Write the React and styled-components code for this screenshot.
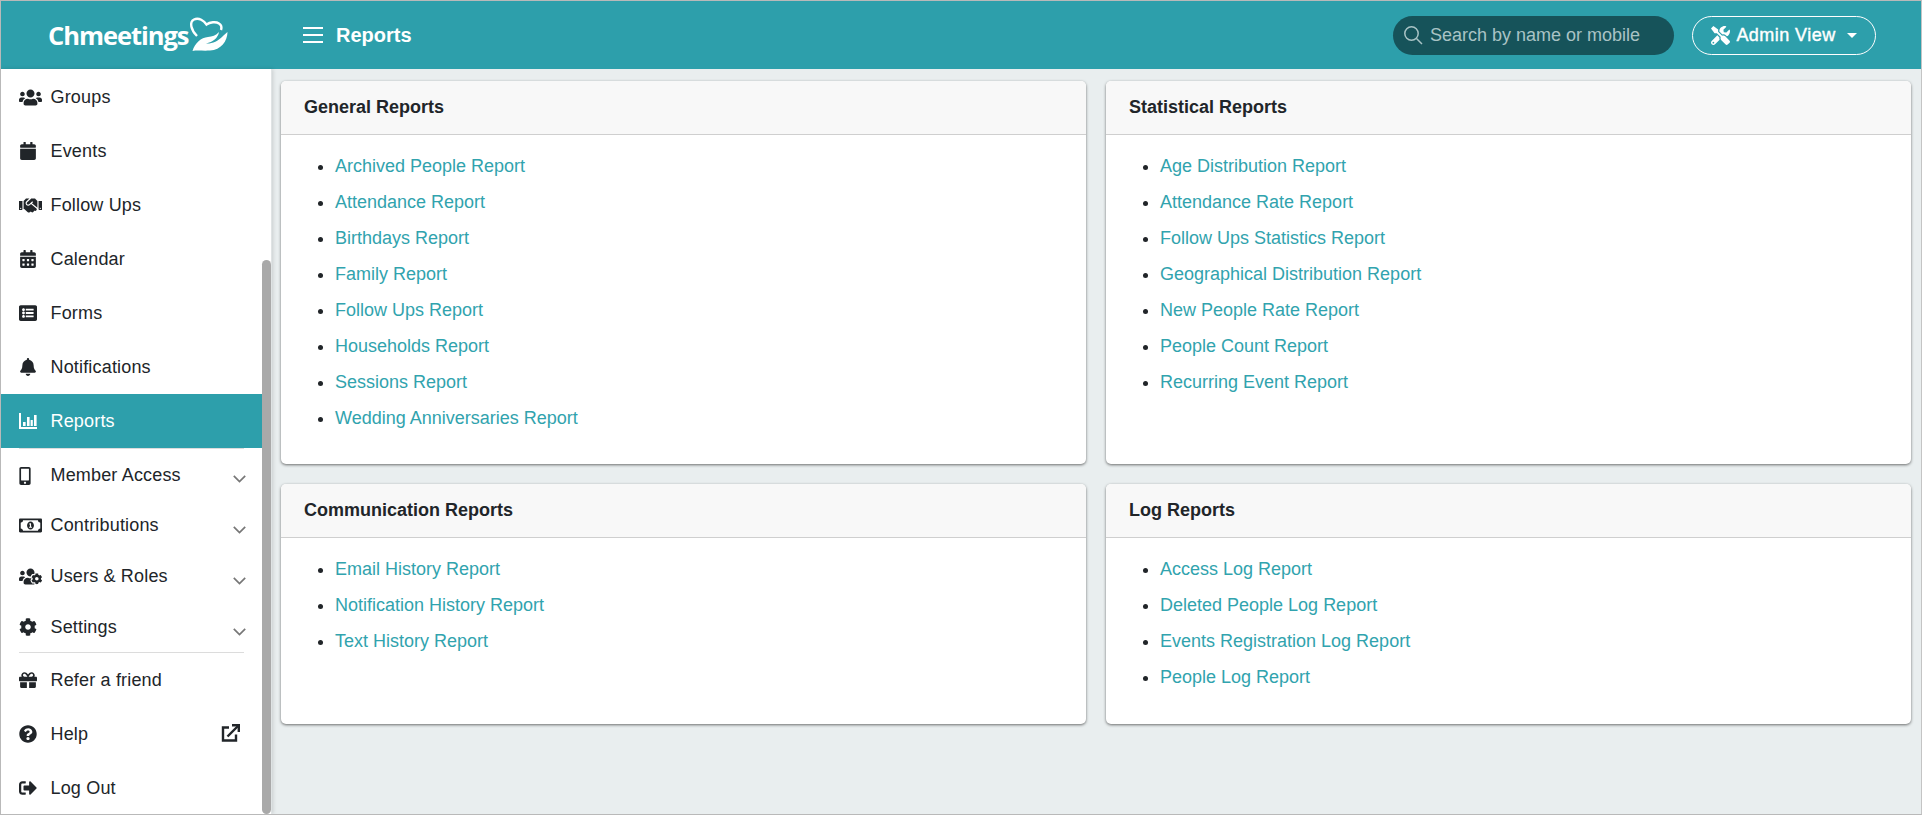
import React from "react";
import styled, { createGlobalStyle } from "styled-components";
import {
  FaUsers, FaCalendar, FaHandshake, FaCalendarAlt, FaListAlt, FaBell, FaMobileAlt,
  FaRegMoneyBillAlt, FaUsersCog, FaCog, FaGift, FaQuestionCircle, FaSignOutAlt, FaTools,
} from "react-icons/fa";

const TEAL = "#2d9fab";

const Global = createGlobalStyle`
  html, body { margin: 0; padding: 0; background: #fff; }
  * { box-sizing: border-box; }
  body { font-family: "Liberation Sans", Arial, sans-serif; color: #212529; }
`;

const Frame = styled.div`
  width: 1922px; height: 815px; border: 1px solid #b9b9b9; border-right-color: #c4c4c4;
  display: flex; flex-direction: column; overflow: hidden; background: #e9eeef;
`;
const Header = styled.header`
  height: 68px; flex: none; background: ${TEAL}; display: flex; align-items: center; color: #fff;
`;
const Brand = styled.div`
  width: 302px; flex: none; display: flex; align-items: center; padding-left: 47px;
`;
const BrandName = styled.span`
  font-family: "Open Sans", sans-serif; font-size: 25.5px; font-weight: 700; letter-spacing: -1.05px; color: #fff;
`;
const BrandMark = styled.svg`
  width: 45px; height: 42px; flex: none; margin: -4px 0 0 -2px;
`;
const Hamburger = styled.svg`
  width: 20px; height: 16px; flex: none; margin-right: 13px;
`;
const PageTitle = styled.h1`
  margin: 0; font-size: 20px; font-weight: 700; flex: 1;
`;
const Search = styled.div`
  width: 281px; height: 39px; border-radius: 20px; background: #16535a; color: #a9c3c5;
  display: flex; align-items: center; padding-left: 10px; gap: 7px; font-size: 18px; margin-right: 18px;
`;
const AdminBtn = styled.button`
  width: 184px; height: 39px; border-radius: 20px; border: 1px solid #fff; background: transparent; color: #fff;
  font: 400 18px "Liberation Sans", Arial, sans-serif; -webkit-text-stroke: 0.4px #fff; letter-spacing: .45px;
  display: flex; align-items: center; justify-content: center; gap: 6px;
  padding: 0; margin-right: 45px;
`;
const Caret = styled.span`
  width: 0; height: 0; border-left: 5.5px solid transparent; border-right: 5.5px solid transparent; border-top: 5.5px solid #fff; margin-left: 5px;
`;
const Body = styled.div`
  flex: 1; display: flex; min-height: 0;
`;
const Sidebar = styled.aside`
  width: 271px; flex: none; background: #fff; position: relative; border-right: 1px solid #dfe3e4;
  box-shadow: 1px 0 4px rgba(0,0,0,.14); overflow: hidden; padding-top: 1px;
`;
const Thumb = styled.div`
  position: absolute; right: 0; top: 191px; bottom: 0; width: 9px; background: #a9a9a9; border-radius: 5px;
`;
const Row = styled.div`
  height: ${p => p.$h || 54}px; padding-top: ${p => p.$pt || 0}px; display: flex; align-items: center; padding-left: 18px; width: 261px; font-size: 18px; position: relative;
  background: ${p => (p.$active ? TEAL : "transparent")}; color: ${p => (p.$active ? "#fff" : "#212529")};
`;
const IconCell = styled.span`
  width: 31.5px; flex: none; display: flex; align-items: center; font-size: 18px;
  color: ${p => (p.$active ? "#fff" : "#212529")};
  margin-left: ${p => p.$shift || 0}px; margin-right: ${p => -(p.$shift || 0)}px;
`;
const RowLabel = styled.span`flex: 1; letter-spacing: .17px;`;
const Chevron = styled.svg`
  position: absolute; right: 16px; top: 26px; width: 13px; height: 8px;
`;
const ExtIcon = styled.svg`
  position: absolute; right: 22px; top: 17px; width: 19px; height: 19px;
`;
const Divider = styled.div`
  height: 1px; background: #dcdcdc; margin: 0 18px; width: 225px;
`;
const Main = styled.main`
  flex: 1; padding: 12px 9px 0 9px; display: grid; grid-template-columns: 805px 805px; grid-template-rows: 383px 240px; column-gap: 20px; row-gap: 20px; align-content: start;
`;
const Card = styled.section`
  background: #fff; border-radius: 5px; box-shadow: 0 1px 3px rgba(0,0,0,.55); overflow: hidden;
`;
const CardHead = styled.h2`
  margin: 0; height: 54px; background: #f8f8f8; border-bottom: 1px solid #cfcfcf; display: flex; align-items: center;
  padding-left: 23px; font-size: 18px; font-weight: 700; color: #212529;
`;
const List = styled.ul`
  margin: 0; padding: 13px 0 0 54px; list-style: disc;
`;
const Item = styled.li`
  height: 36px; line-height: 36px; font-size: 18px; color: #212529;
`;
const RLink = styled.a`
  color: #31a3ae; text-decoration: none;
`;

const ReportsIcon = () => (
  <svg width="18" height="17" viewBox="0 0 18 17" fill="#fff">
    <path d="M0 0h2v14h16v2H0z" />
    <rect x="4" y="9" width="2.6" height="4" />
    <rect x="8" y="4" width="2.6" height="9" />
    <rect x="11.6" y="7" width="2.2" height="6" />
    <rect x="15" y="2" width="2.6" height="11" />
  </svg>
);

const ChevronDown = () => (
  <Chevron viewBox="0 0 13 8" fill="none" stroke="#777" strokeWidth="1.7">
    <path d="M.8.8 6.5 6.6 12.2.8" />
  </Chevron>
);

const groups = [
  ["Groups", <FaUsers size={23} />],
  ["Events", <FaCalendar size={18} />],
  ["Follow Ups", <FaHandshake size={23} />],
  ["Calendar", <FaCalendarAlt size={18} />],
  ["Forms", <FaListAlt size={18} />],
  ["Notifications", <FaBell size={18} />],
];
const nested = [
  ["Member Access", <FaMobileAlt size={18} />, 51, 2, -3.5],
  ["Contributions", <FaRegMoneyBillAlt size={23} />, 51, 0, 0],
  ["Users & Roles", <FaUsersCog size={23} />, 51, 0, 0],
  ["Settings", <FaCog size={18} />, 50, 0, 0],
];

const cards = [
  ["General Reports", ["Archived People Report", "Attendance Report", "Birthdays Report", "Family Report", "Follow Ups Report", "Households Report", "Sessions Report", "Wedding Anniversaries Report"]],
  ["Statistical Reports", ["Age Distribution Report", "Attendance Rate Report", "Follow Ups Statistics Report", "Geographical Distribution Report", "New People Rate Report", "People Count Report", "Recurring Event Report"]],
  ["Communication Reports", ["Email History Report", "Notification History Report", "Text History Report"]],
  ["Log Reports", ["Access Log Report", "Deleted People Log Report", "Events Registration Log Report", "People Log Report"]],
];

export default function App() {
  return (
    <Frame>
      <Global />
      <Header>
        <Brand>
          <BrandName>Chmeetings</BrandName>
          <BrandMark viewBox="0 0 45 42" fill="none">
            <path d="M11 24C5 18 3 10 8 7.5c5-2.5 10 1.5 12.5 5 3.5-2.5 9.5-3 12.5-1 2.5 1.500 3 3.500 2 6.500" stroke="#fff" strokeWidth="2.4" />
            <path d="M6.500 39C9 31 15 25.500 22 25c4-.3 8-1.500 11-5-1 6-6 10-13 11.500 6 .5 12-2.500 16-6.500 2-2 4-4 5.500-5 0 9-6.500 18-17.500 18.500-7 .5-13-.5-17.500.5z" fill="#fff" />
          </BrandMark>
        </Brand>
        <Hamburger viewBox="0 0 20 16" stroke="#fff" strokeWidth="2">
          <path d="M0 1h20M0 8h20M0 15h20" />
        </Hamburger>
        <PageTitle>Reports</PageTitle>
        <Search>
          <svg width="20" height="20" viewBox="0 0 20 20" fill="none" stroke="#a9c3c5" strokeWidth="1.5">
            <circle cx="8.5" cy="8.5" r="6.7" />
            <path d="m13.5 13.5 5.5 5.5" />
          </svg>
          <span>Search by name or mobile</span>
        </Search>
        <AdminBtn>
          <FaTools size={19} />
          Admin View
          <Caret />
        </AdminBtn>
      </Header>
      <Body>
        <Sidebar>
          {groups.map(([label, icon]) => (
            <Row key={label}>
              <IconCell>{icon}</IconCell>
              <RowLabel>{label}</RowLabel>
            </Row>
          ))}
          <Row $active>
            <IconCell $active><ReportsIcon /></IconCell>
            <RowLabel>Reports</RowLabel>
          </Row>
          <Divider />
          {nested.map(([label, icon, h, pt, shift]) => (
            <Row key={label} $h={h} $pt={pt}>
              <IconCell $shift={shift}>{icon}</IconCell>
              <RowLabel>{label}</RowLabel>
              <ChevronDown />
            </Row>
          ))}
          <Divider />
          <Row>
            <IconCell><FaGift size={18} /></IconCell>
            <RowLabel>Refer a friend</RowLabel>
          </Row>
          <Row>
            <IconCell><FaQuestionCircle size={18} /></IconCell>
            <RowLabel>Help</RowLabel>
            <ExtIcon viewBox="0 0 19 19" fill="none" stroke="#212529" strokeWidth="2.4">
              <path d="M8 3.500H2v13h13v-6" />
              <path d="M6.500 12.500 17 2" />
              <path d="M11 1.200h6.800V8" />
            </ExtIcon>
          </Row>
          <Row>
            <IconCell><FaSignOutAlt size={18} /></IconCell>
            <RowLabel>Log Out</RowLabel>
          </Row>
          <Thumb />
        </Sidebar>
        <Main>
          {cards.map(([title, items]) => (
            <Card key={title}>
              <CardHead>{title}</CardHead>
              <List>
                {items.map(t => (
                  <Item key={t}><RLink href="#">{t}</RLink></Item>
                ))}
              </List>
            </Card>
          ))}
        </Main>
      </Body>
    </Frame>
  );
}
